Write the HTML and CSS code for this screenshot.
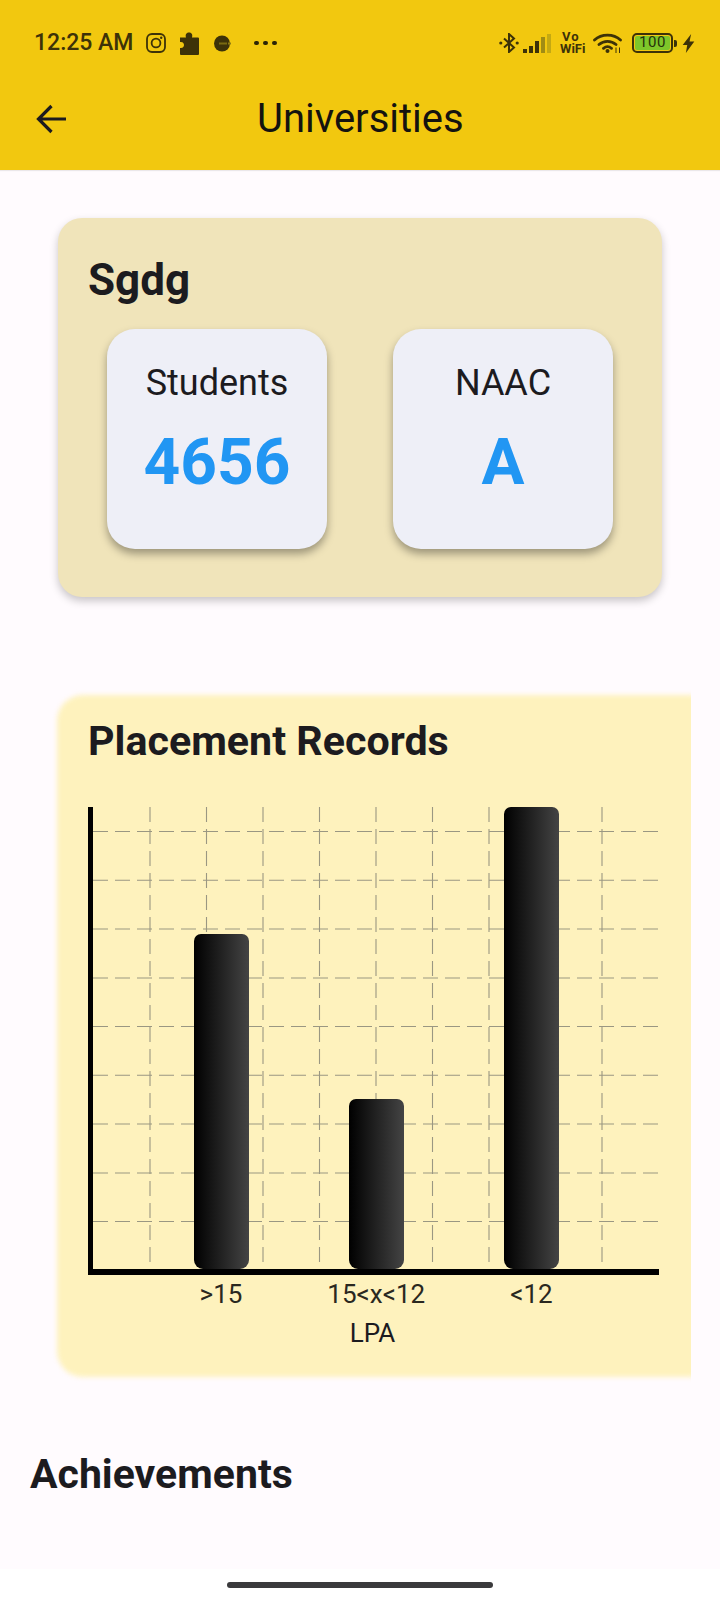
FILE: index.html
```html
<!DOCTYPE html>
<html lang="en">
<head>
<meta charset="utf-8">
<title>Universities</title>
<link rel="stylesheet" href="styles.css">
</head>
<body>
<div class="phone">
  <header class="appbar">
    <div class="status">
      <div class="status-left">
        <span class="time">12:25 AM</span>
        <svg class="ic-insta" viewBox="0 0 20 20"><rect x="1" y="1" width="18" height="18" rx="5" fill="none" stroke="#3d3208" stroke-width="1.8"/><circle cx="10" cy="10" r="4.4" fill="none" stroke="#3d3208" stroke-width="1.8"/><circle cx="15.200" cy="4.800" r="1.200" fill="#3d3208"/></svg>
        <svg class="ic-puzzle" viewBox="0 0 21 23"><path d="M1 5.500H7C6.200 3 7 .5 10 .5S13.800 3 13 5.500H19a1 1 0 0 1 1 1V22a1 1 0 0 1-1 1H2a1 1 0 0 1-1-1V16C4 16.500 5 14.500 5 13S4 9.500 1 10z" fill="#3d3208"/></svg>
        <svg class="ic-dot" viewBox="0 0 18 17"><circle cx="8" cy="8.500" r="8" fill="#3d3208"/><rect x="5" y="7.500" width="8" height="2" fill="#7a6a10"/><rect x="14" y="7.500" width="3" height="2" fill="#8f7c10"/></svg>
        <span class="dots"><i></i><i></i><i></i></span>
      </div>
      <div class="status-right">
        <svg class="ic-bt" viewBox="0 0 20 20"><path d="M5 5.500l10 9-5 4.500V1l5 4.500-10 9" fill="none" stroke="#3d3208" stroke-width="2"/><circle cx="1.800" cy="10" r="1.600" fill="#3d3208"/><circle cx="18.200" cy="10" r="1.600" fill="#3d3208"/></svg>
        <svg class="ic-signal" viewBox="0 0 28 19"><rect x="0" y="15" width="4" height="4" fill="#3d3208"/><rect x="6" y="12" width="4" height="7" fill="#3d3208"/><rect x="12" y="7" width="4" height="12" fill="#3d3208"/><rect x="18" y="3" width="4" height="16" fill="#a08c14"/><rect x="24" y="0" width="4" height="19" fill="#c4a912"/></svg>
        <span class="vowifi"><span class="vo">Vo</span><span>WiFi</span></span>
        <svg class="ic-wifi" viewBox="0 0 29 20"><path d="M1.500 7c7-6.500 19-6.500 26 0M6 11.500c4.800-4.300 12.200-4.300 17 0M10.500 15.300c2.400-2 5.600-2 8 0" fill="none" stroke="#3d3208" stroke-width="2.800" stroke-linecap="round"/><circle cx="14.500" cy="18" r="2" fill="#3d3208"/><path d="M23 14.500v5.500M26.500 14.500v5.500" stroke="#3d3208" stroke-width="1"/></svg>
        <span class="battery"><span class="battery-fill">100</span></span>
        <span class="battery-cap"></span>
        <svg class="ic-bolt" viewBox="0 0 12 18"><path d="M8.500 0L.5 10.500h4.300L3.500 18 11.500 7H7z" fill="#3d3208"/></svg>
      </div>
    </div>
    <div class="toolbar">
      <svg class="ic-back" viewBox="0 0 30 30"><path d="M30 15H3M15.500 2L2.500 15l13 13" fill="none" stroke="#1c1b1f" stroke-width="3.200"/></svg>
      <h1 class="title">Universities</h1>
    </div>
  </header>

  <main class="content">
    <section class="uni-card">
      <h2 class="uni-name">Sgdg</h2>
      <div class="stats">
        <div class="stat">
          <span class="stat-label">Students</span>
          <span class="stat-value">4656</span>
        </div>
        <div class="stat">
          <span class="stat-label">NAAC</span>
          <span class="stat-value">A</span>
        </div>
      </div>
    </section>

    <section class="placement">
      <h2 class="placement-title">Placement Records</h2>
      <div class="chart">
        <svg class="grid" viewBox="0 0 571 456" width="571" height="456">
          <path class="grid-v" d="M62 0V456M118.500 0V456M175 0V456M231.500 0V456M288 0V456M344.500 0V456M401 0V456M457.500 0V456M514 0V456"/>
          <path class="grid-h" d="M5 24.500H571M5 73.300H571M5 122H571M5 171H571M5 219.500H571M5 268.300H571M5 317H571M5 366H571M5 414.500H571"/>
        </svg>
        <div class="bar-slot"><div class="bar" style="height:335px"></div></div>
        <div class="bar-slot"><div class="bar" style="height:170px"></div></div>
        <div class="bar-slot"><div class="bar" style="height:462px"></div></div>
      </div>
      <div class="x-labels">
        <span>&gt;15</span>
        <span>15&lt;x&lt;12</span>
        <span>&lt;12</span>
      </div>
      <div class="x-title">LPA</div>
    </section>

    <h2 class="achievements">Achievements</h2>
  </main>

  <footer class="navbar"><div class="home-bar"></div></footer>
</div>
</body>
</html>
```
FILE: styles.css
```css
* { box-sizing: border-box; }
html, body { margin: 0; padding: 0; }
body { background: #fffbfe; font-family: Roboto, "Liberation Sans", sans-serif; color: #1c1b1f; }
.phone { width: 720px; height: 1600px; display: flex; flex-direction: column; overflow: hidden; }

.appbar { height: 170px; background: #f2c80f; flex: none; padding: 0 34px; display: flex; flex-direction: column; box-shadow: 0 1px 1px rgba(0,0,0,.08); }
.status { height: 42px; margin-top: 22px; display: flex; justify-content: space-between; align-items: center; flex: none; }
.status-left { display: flex; align-items: center; }
.status-right { display: flex; align-items: center; margin-right: -9px; }
.time { font-size: 23px; font-weight: 500; color: #3d3208; line-height: 24px; white-space: nowrap; }
.ic-insta { width: 20px; height: 20px; margin-left: 13px; flex: none; }
.ic-puzzle { width: 21px; height: 23px; margin-left: 13px; flex: none; }
.ic-dot { width: 18px; height: 17px; margin-left: 14px; flex: none; }
.dots { display: flex; gap: 4.500px; margin-left: 22px; }
.dots i { width: 4.500px; height: 4.500px; border-radius: 50%; background: #2c2406; display: block; }
.ic-bt { width: 20px; height: 20px; flex: none; }
.ic-signal { width: 28px; height: 19px; margin-left: 4px; flex: none; }
.vowifi { display: flex; flex-direction: column; width: 24px; font-size: 13px; line-height: 12px; font-weight: 700; color: #3d3208; margin-left: 9px; white-space: nowrap; }
.vo { letter-spacing: 1px; padding-left: 2px; }
.ic-wifi { width: 29px; height: 20px; margin-left: 9px; flex: none; }
.battery { width: 41px; height: 20px; border: 2.500px solid #3d3208; border-radius: 5px; margin-left: 10px; padding: 1px; display: flex; flex: none; }
.battery-fill { flex: 1; background: #7ec62a; border-radius: 2px; font-size: 15px; line-height: 13px; letter-spacing: .5px; text-align: center; color: #26300a; font-weight: 400; white-space: nowrap; }
.battery-cap { width: 3px; height: 7px; background: #3d3208; margin-left: 1px; border-radius: 0 2px 2px 0; flex: none; }
.ic-bolt { width: 13px; height: 19px; margin-left: 5px; flex: none; }

.toolbar { display: flex; align-items: center; height: 64px; margin-top: 23px; flex: none; }
.ic-back { width: 30px; height: 30px; margin-left: 2px; flex: none; }
.title { margin: 0 0 0 191px; font-size: 40px; font-weight: 400; color: #14130f; line-height: 48px; white-space: nowrap; }

.content { flex: 1; display: flex; flex-direction: column; min-height: 0; }

.uni-card { margin: 48px 0 0 58px; width: 604px; height: 379px; flex: none; background: #f0e4ba; border-radius: 24px; padding: 36px 31px 0 30px; box-shadow: 0 4px 8px rgba(0,0,0,.22); }
.uni-name { margin: 0; font-size: 44px; line-height: 52px; font-weight: 700; }
.stats { display: flex; gap: 66px; margin: 23px 0 0 19px; }
.stat { width: 220px; height: 220px; background: #eeeff7; border-radius: 28px; display: flex; flex-direction: column; align-items: center; box-shadow: 0 5px 8px rgba(0,0,0,.35); padding-top: 34px; }
.stat-label { font-size: 36px; line-height: 40px; font-weight: 400; }
.stat-value { font-size: 64px; line-height: 76px; font-weight: 700; color: #2196f3; margin-top: 22px; }

.placement { position: relative; isolation: isolate; margin: 98px 0 0 57px; width: 660px; height: 682px; flex: none; padding: 24px 0 0 31px; clip-path: inset(-12px 26px -12px -12px); }
.placement::before { content: ""; position: absolute; inset: 0; z-index: -1; background: #fef2bd; border-radius: 26px; filter: blur(2.500px); }
.placement-title { margin: 0; font-size: 41.200px; line-height: 44px; font-weight: 700; }
.chart { position: relative; width: 571px; height: 468px; margin: 44px 0 0 0; border-left: 5px solid #000; border-bottom: 6px solid #000; display: grid; grid-template-columns: repeat(3, 155.250px); padding-left: 100.500px; }
.grid { position: absolute; left: -5px; top: 0; }
.grid-v, .grid-h { stroke: #9a9782; stroke-width: 1.100; fill: none; stroke-dasharray: 15 7; }
.bar-slot { display: flex; align-items: flex-end; position: relative; }
.bar { width: 55px; background: linear-gradient(90deg, #000, #444); border-radius: 7px 7px 9px 9px; }
.x-labels { display: grid; grid-template-columns: repeat(3, 155.250px); margin: 5px 0 0 105.500px; font-size: 26px; line-height: 28px; color: #2a2820; }
.x-labels span { width: 55px; display: flex; justify-content: center; white-space: nowrap; }
.x-title { font-size: 26px; line-height: 28px; margin: 11px 0 0 0; width: 569px; text-align: center; }

.achievements { margin: 73px 0 0 30px; font-size: 41px; line-height: 48px; font-weight: 700; }

.navbar { height: 31px; flex: none; background: #fff; display: flex; justify-content: center; padding-top: 13px; }
.home-bar { width: 266px; height: 6px; border-radius: 3px; background: #3a3a3c; }
```
